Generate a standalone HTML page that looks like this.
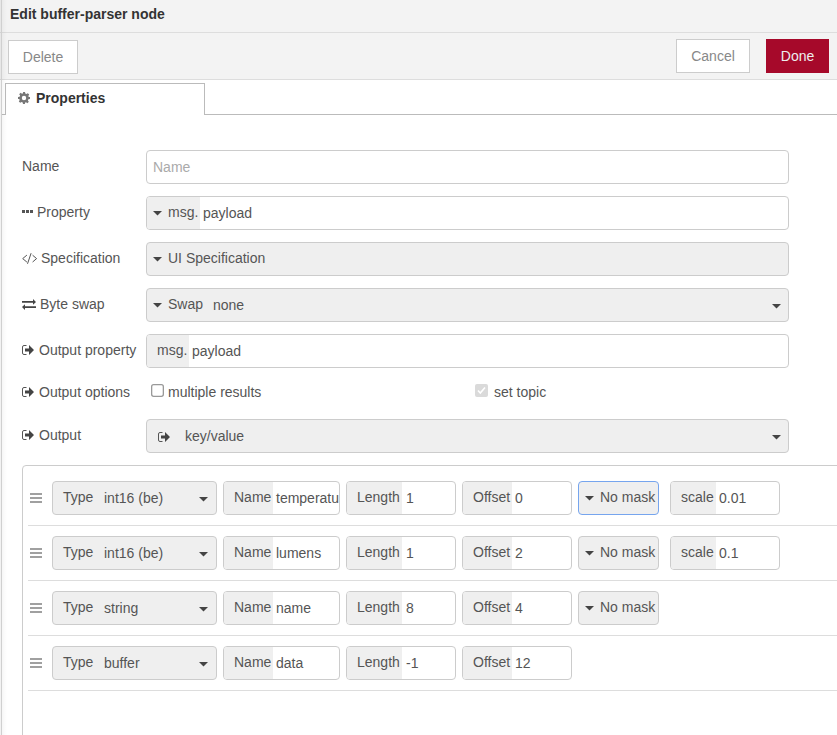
<!DOCTYPE html><html><head><meta charset="utf-8"><title>Edit buffer-parser node</title><style>
*{box-sizing:border-box;margin:0;padding:0}
html,body{width:837px;height:735px;overflow:hidden;background:#fff}
body{font-family:"Liberation Sans",sans-serif;font-size:14px;color:#555;position:relative}
.a{position:absolute}
.t{position:absolute;line-height:20px;white-space:nowrap}
.btn{position:absolute;border:1px solid #ccc;background:#fff;color:#888;height:34px;line-height:32px;text-align:center}
.done{background:#a6092a;border-color:#a6092a;color:#eee}
.box{position:absolute;border:1px solid #ccc;border-radius:4px;background:#fff;overflow:hidden;height:34px}
.gr{position:absolute;left:0;top:0;bottom:0;background:#efefef}
.caret{position:absolute;width:9px;height:5px}
.sep{position:absolute;left:28px;width:809px;height:1px;background:#ddd}
.bars{position:absolute;width:12px;height:10px}
.bars i{position:absolute;left:0;width:12px;height:2px;background:#a0a0a0}
svg{position:absolute;display:block}
</style></head><body>
<div class="a" style="left:0;top:0;width:837px;height:33px;background:#f3f3f3;border-bottom:1px solid #ddd"></div>
<div class="a" style="left:0;top:33px;width:837px;height:47px;background:#f3f3f3;border-bottom:1px solid #ddd"></div>
<div class="t" style="left:10px;top:4px;font-weight:bold;color:#333">Edit buffer-parser node</div>
<div class="btn" style="left:8px;top:40px;width:70px">Delete</div>
<div class="btn" style="left:676px;top:39px;width:74px">Cancel</div>
<div class="btn done" style="left:766px;top:39px;width:63px">Done</div>
<div class="a" style="left:2px;top:114px;width:835px;height:1px;background:#bbb"></div>
<div class="a" style="left:5px;top:83px;width:200px;height:32px;border:1px solid #bbb;border-bottom:none;background:#fff"></div>
<svg style="left:18px;top:92px" width="12" height="12" viewBox="0 0 12 12"><path fill="#777" d="M5 0h2l.3 1.6 1.1.5 1.4-.9 1.4 1.4-.9 1.4.5 1.1L12 5v2l-1.6.3-.5 1.1.9 1.4-1.4 1.4-1.4-.9-1.1.5L7 12H5l-.3-1.6-1.1-.5-1.4.9-1.4-1.4.9-1.4-.5-1.1L0 7V5l1.6-.3.5-1.1-.9-1.4 1.4-1.4 1.4.9 1.1-.5z M6 3.8A2.2 2.2 0 1 0 6 8.2 2.2 2.2 0 1 0 6 3.8z" fill-rule="evenodd"/></svg>
<div class="t" style="left:36px;top:88px;font-weight:bold;color:#333">Properties</div>
<div class="t" style="left:22px;top:156px">Name</div>
<div class="box" style="left:146px;top:150px;width:643px"></div>
<div class="t" style="left:153px;top:157px;color:#aaa">Name</div>
<svg style="left:22px;top:210px" width="11" height="3" viewBox="0 0 11 3"><path fill="#555" d="M0 0h3v3H0zM4 0h3v3H4zM8 0h3v3H8z"/></svg>
<div class="t" style="left:37px;top:202px">Property</div>
<div class="box" style="left:146px;top:196px;width:643px"><div class="gr" style="width:53px"></div></div>
<svg style="left:153px;top:211px" width="9" height="5" viewBox="0 0 9 5"><path fill="#444" d="M0 0H9L4.5 4.6z"/></svg>
<div class="t" style="left:168px;top:202px">msg.</div>
<div class="t" style="left:203px;top:203px">payload</div>
<svg style="left:22px;top:253px" width="16" height="11" viewBox="0 0 16 11"><path fill="none" stroke="#555" stroke-width="1" d="M4.9 2.1L0.7 5.6 4.9 9.1M10.6 2.2l4 3.4-4 3.4M9.1 0.2L5.5 10.8"/></svg>
<div class="t" style="left:41px;top:248px">Specification</div>
<div class="box" style="left:146px;top:242px;width:643px;background:#efefef"></div>
<svg style="left:153px;top:257px" width="9" height="5" viewBox="0 0 9 5"><path fill="#444" d="M0 0H9L4.5 4.6z"/></svg>
<div class="t" style="left:168px;top:248px">UI Specification</div>
<svg style="left:22px;top:299px" width="15" height="11" viewBox="0 0 15 11"><path fill="#444" d="M0 2.1h11V0.1l3 2.8-3 2.8V3.7H0zM14 7.3H3V5.3L0 8.1l3 2.8V8.9h11z"/></svg>
<div class="t" style="left:40px;top:294px">Byte swap</div>
<div class="box" style="left:146px;top:288px;width:643px;background:#efefef"></div>
<svg style="left:153px;top:303px" width="9" height="5" viewBox="0 0 9 5"><path fill="#444" d="M0 0H9L4.5 4.6z"/></svg>
<div class="t" style="left:168px;top:294px">Swap</div>
<div class="t" style="left:213px;top:295px">none</div>
<svg style="left:772px;top:304px" width="9" height="5" viewBox="0 0 9 5"><path fill="#444" d="M0 0H9L4.5 4.6z"/></svg>
<svg style="left:22px;top:345px" width="13" height="10" viewBox="0 0 13 10"><path fill="none" stroke="#555" stroke-width="1" d="M4.5 .5H2A1.5 1.5 0 0 0 .5 2v6A1.5 1.5 0 0 0 2 9.5h2.5"/><path fill="#444" d="M3 3.4h4V0l5 5-5 5V6.6H3z"/></svg>
<div class="t" style="left:39px;top:340px">Output property</div>
<div class="box" style="left:146px;top:334px;width:643px"><div class="gr" style="width:42px"></div></div>
<div class="t" style="left:157px;top:340px">msg.</div>
<div class="t" style="left:192px;top:341px">payload</div>
<svg style="left:22px;top:387px" width="13" height="10" viewBox="0 0 13 10"><path fill="none" stroke="#555" stroke-width="1" d="M4.5 .5H2A1.5 1.5 0 0 0 .5 2v6A1.5 1.5 0 0 0 2 9.5h2.5"/><path fill="#444" d="M3 3.4h4V0l5 5-5 5V6.6H3z"/></svg>
<div class="t" style="left:39px;top:382px">Output options</div>
<svg style="left:151px;top:384px" width="13" height="13" viewBox="0 0 13 13"><rect x=".65" y=".65" width="11.7" height="11.7" rx="2" fill="#fff" stroke="#999" stroke-width="1.3"/></svg>
<div class="t" style="left:168px;top:382px">multiple results</div>
<svg style="left:475px;top:384px" width="13" height="13" viewBox="0 0 13 13"><rect x="0" y="0" width="13" height="13" rx="2" fill="#dadada"/><path fill="none" stroke="#fff" stroke-width="1.6" d="M3 6.5l2.3 2.5L10 3.5"/></svg>
<div class="t" style="left:494px;top:382px">set topic</div>
<svg style="left:22px;top:430px" width="13" height="10" viewBox="0 0 13 10"><path fill="none" stroke="#555" stroke-width="1" d="M4.5 .5H2A1.5 1.5 0 0 0 .5 2v6A1.5 1.5 0 0 0 2 9.5h2.5"/><path fill="#444" d="M3 3.4h4V0l5 5-5 5V6.6H3z"/></svg>
<div class="t" style="left:39px;top:425px">Output</div>
<div class="box" style="left:146px;top:419px;width:643px;background:#efefef"></div>
<svg style="left:158px;top:432px" width="13" height="10" viewBox="0 0 13 10"><path fill="none" stroke="#555" stroke-width="1" d="M4.5 .5H2A1.5 1.5 0 0 0 .5 2v6A1.5 1.5 0 0 0 2 9.5h2.5"/><path fill="#444" d="M3 3.4h4V0l5 5-5 5V6.6H3z"/></svg>
<div class="t" style="left:185px;top:426px">key/value</div>
<svg style="left:772px;top:435px" width="9" height="5" viewBox="0 0 9 5"><path fill="#444" d="M0 0H9L4.5 4.6z"/></svg>
<div class="a" style="left:22px;top:465px;width:900px;height:400px;border:1px solid #ccc;border-radius:4px"></div>
<div class="bars" style="left:30px;top:493px"><i style="top:0"></i><i style="top:4px"></i><i style="top:8px"></i></div>
<div class="box" style="left:52px;top:481px;width:165px;background:#efefef"></div>
<div class="t" style="left:63px;top:487px">Type</div>
<div class="t" style="left:104px;top:488px">int16 (be)</div>
<svg style="left:199px;top:497px" width="9" height="5" viewBox="0 0 9 5"><path fill="#444" d="M0 0H9L4.5 4.6z"/></svg>
<div class="box" style="left:223px;top:481px;width:117px"><div class="gr" style="width:49px"></div><div class="t" style="left:52px;top:6px">temperatu</div></div>
<div class="t" style="left:234px;top:487px">Name</div>
<div class="box" style="left:346px;top:481px;width:110px"><div class="gr" style="width:55px"></div></div>
<div class="t" style="left:357px;top:487px">Length</div>
<div class="t" style="left:406px;top:488px">1</div>
<div class="box" style="left:462px;top:481px;width:110px"><div class="gr" style="width:49px"></div></div>
<div class="t" style="left:473px;top:487px">Offset</div>
<div class="t" style="left:515px;top:488px">0</div>
<div class="box" style="left:578px;top:481px;width:81px;background:#efefef;border-color:#76a5ee"><div class="t" style="left:21px;top:5px">No mask</div></div>
<svg style="left:585px;top:496px" width="9" height="5" viewBox="0 0 9 5"><path fill="#444" d="M0 0H9L4.5 4.6z"/></svg>
<div class="box" style="left:670px;top:481px;width:110px"><div class="gr" style="width:45px"></div></div>
<div class="t" style="left:681px;top:487px">scale</div>
<div class="t" style="left:719px;top:488px">0.01</div>
<div class="sep" style="top:525px"></div>
<div class="bars" style="left:30px;top:548px"><i style="top:0"></i><i style="top:4px"></i><i style="top:8px"></i></div>
<div class="box" style="left:52px;top:536px;width:165px;background:#efefef"></div>
<div class="t" style="left:63px;top:542px">Type</div>
<div class="t" style="left:104px;top:543px">int16 (be)</div>
<svg style="left:199px;top:552px" width="9" height="5" viewBox="0 0 9 5"><path fill="#444" d="M0 0H9L4.5 4.6z"/></svg>
<div class="box" style="left:223px;top:536px;width:117px"><div class="gr" style="width:49px"></div><div class="t" style="left:52px;top:6px">lumens</div></div>
<div class="t" style="left:234px;top:542px">Name</div>
<div class="box" style="left:346px;top:536px;width:110px"><div class="gr" style="width:55px"></div></div>
<div class="t" style="left:357px;top:542px">Length</div>
<div class="t" style="left:406px;top:543px">1</div>
<div class="box" style="left:462px;top:536px;width:110px"><div class="gr" style="width:49px"></div></div>
<div class="t" style="left:473px;top:542px">Offset</div>
<div class="t" style="left:515px;top:543px">2</div>
<div class="box" style="left:578px;top:536px;width:81px;background:#efefef;border-color:#ccc"><div class="t" style="left:21px;top:5px">No mask</div></div>
<svg style="left:585px;top:551px" width="9" height="5" viewBox="0 0 9 5"><path fill="#444" d="M0 0H9L4.5 4.6z"/></svg>
<div class="box" style="left:670px;top:536px;width:110px"><div class="gr" style="width:45px"></div></div>
<div class="t" style="left:681px;top:542px">scale</div>
<div class="t" style="left:719px;top:543px">0.1</div>
<div class="sep" style="top:580px"></div>
<div class="bars" style="left:30px;top:603px"><i style="top:0"></i><i style="top:4px"></i><i style="top:8px"></i></div>
<div class="box" style="left:52px;top:591px;width:165px;background:#efefef"></div>
<div class="t" style="left:63px;top:597px">Type</div>
<div class="t" style="left:104px;top:598px">string</div>
<svg style="left:199px;top:607px" width="9" height="5" viewBox="0 0 9 5"><path fill="#444" d="M0 0H9L4.5 4.6z"/></svg>
<div class="box" style="left:223px;top:591px;width:117px"><div class="gr" style="width:49px"></div><div class="t" style="left:52px;top:6px">name</div></div>
<div class="t" style="left:234px;top:597px">Name</div>
<div class="box" style="left:346px;top:591px;width:110px"><div class="gr" style="width:55px"></div></div>
<div class="t" style="left:357px;top:597px">Length</div>
<div class="t" style="left:406px;top:598px">8</div>
<div class="box" style="left:462px;top:591px;width:110px"><div class="gr" style="width:49px"></div></div>
<div class="t" style="left:473px;top:597px">Offset</div>
<div class="t" style="left:515px;top:598px">4</div>
<div class="box" style="left:578px;top:591px;width:81px;background:#efefef;border-color:#ccc"><div class="t" style="left:21px;top:5px">No mask</div></div>
<svg style="left:585px;top:606px" width="9" height="5" viewBox="0 0 9 5"><path fill="#444" d="M0 0H9L4.5 4.6z"/></svg>
<div class="sep" style="top:635px"></div>
<div class="bars" style="left:30px;top:658px"><i style="top:0"></i><i style="top:4px"></i><i style="top:8px"></i></div>
<div class="box" style="left:52px;top:646px;width:165px;background:#efefef"></div>
<div class="t" style="left:63px;top:652px">Type</div>
<div class="t" style="left:104px;top:653px">buffer</div>
<svg style="left:199px;top:662px" width="9" height="5" viewBox="0 0 9 5"><path fill="#444" d="M0 0H9L4.5 4.6z"/></svg>
<div class="box" style="left:223px;top:646px;width:117px"><div class="gr" style="width:49px"></div><div class="t" style="left:52px;top:6px">data</div></div>
<div class="t" style="left:234px;top:652px">Name</div>
<div class="box" style="left:346px;top:646px;width:110px"><div class="gr" style="width:55px"></div></div>
<div class="t" style="left:357px;top:652px">Length</div>
<div class="t" style="left:406px;top:653px">-1</div>
<div class="box" style="left:462px;top:646px;width:110px"><div class="gr" style="width:49px"></div></div>
<div class="t" style="left:473px;top:652px">Offset</div>
<div class="t" style="left:515px;top:653px">12</div>
<div class="sep" style="top:690px"></div>
<div class="a" style="left:0;top:0;width:8px;height:735px;background:linear-gradient(to right,rgba(0,0,0,.05) 0,rgba(0,0,0,.05) 1px,#d0d0d0 1px,#d0d0d0 2px,rgba(0,0,0,.035) 2px,rgba(0,0,0,0) 7px)"></div>
</body></html>
